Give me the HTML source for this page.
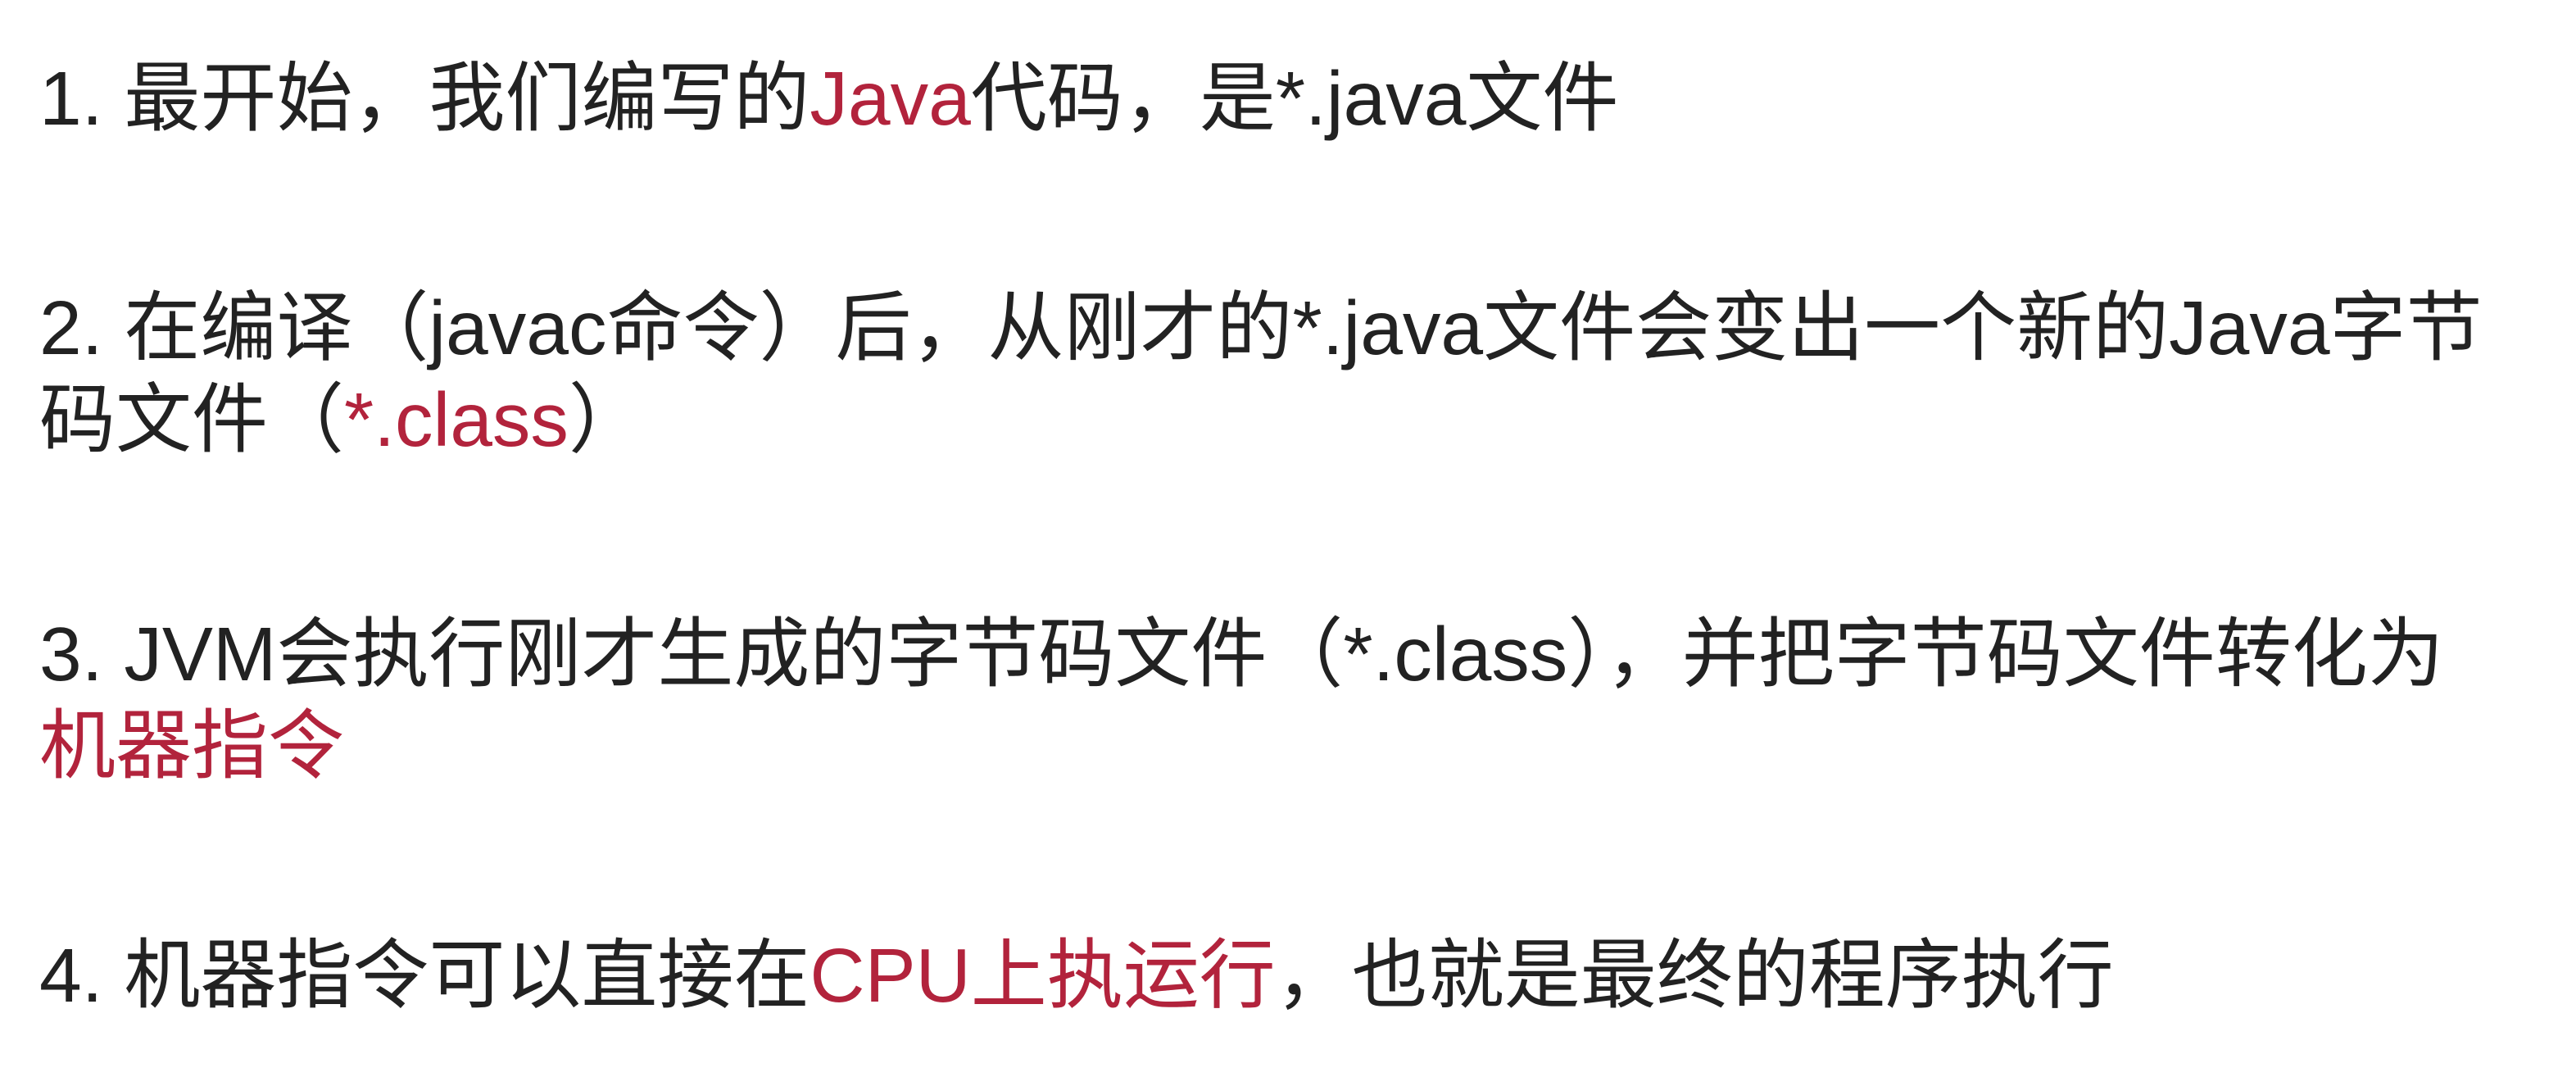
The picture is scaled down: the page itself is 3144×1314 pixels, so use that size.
<!DOCTYPE html>
<html><head><meta charset="utf-8"><style>
html,body{margin:0;padding:0;background:#fff;width:3144px;height:1314px;overflow:hidden}
.p{position:absolute;left:48px;font-family:"Liberation Sans","Noto Sans CJK SC",sans-serif;font-size:93px;line-height:112px;color:#222;white-space:nowrap}
.r{color:#b2233c}
</style></head><body>
<div class="p" style="top:64px">1. 最开始，我们编写的<span class="r">Java</span>代码，是*.java文件</div>
<div class="p" style="top:344px">2. 在编译（javac命令）后，从刚才的*.java文件会变出一个新的Java字节<br>码文件（<span class="r">*.class</span>）</div>
<div class="p" style="top:742px">3. JVM会执行刚才生成的字节码文件（*.class），并把字节码文件转化为<br><span class="r">机器指令</span></div>
<div class="p" style="top:1134px">4. 机器指令可以直接在<span class="r">CPU上执运行</span>，也就是最终的程序执行</div>
</body></html>
